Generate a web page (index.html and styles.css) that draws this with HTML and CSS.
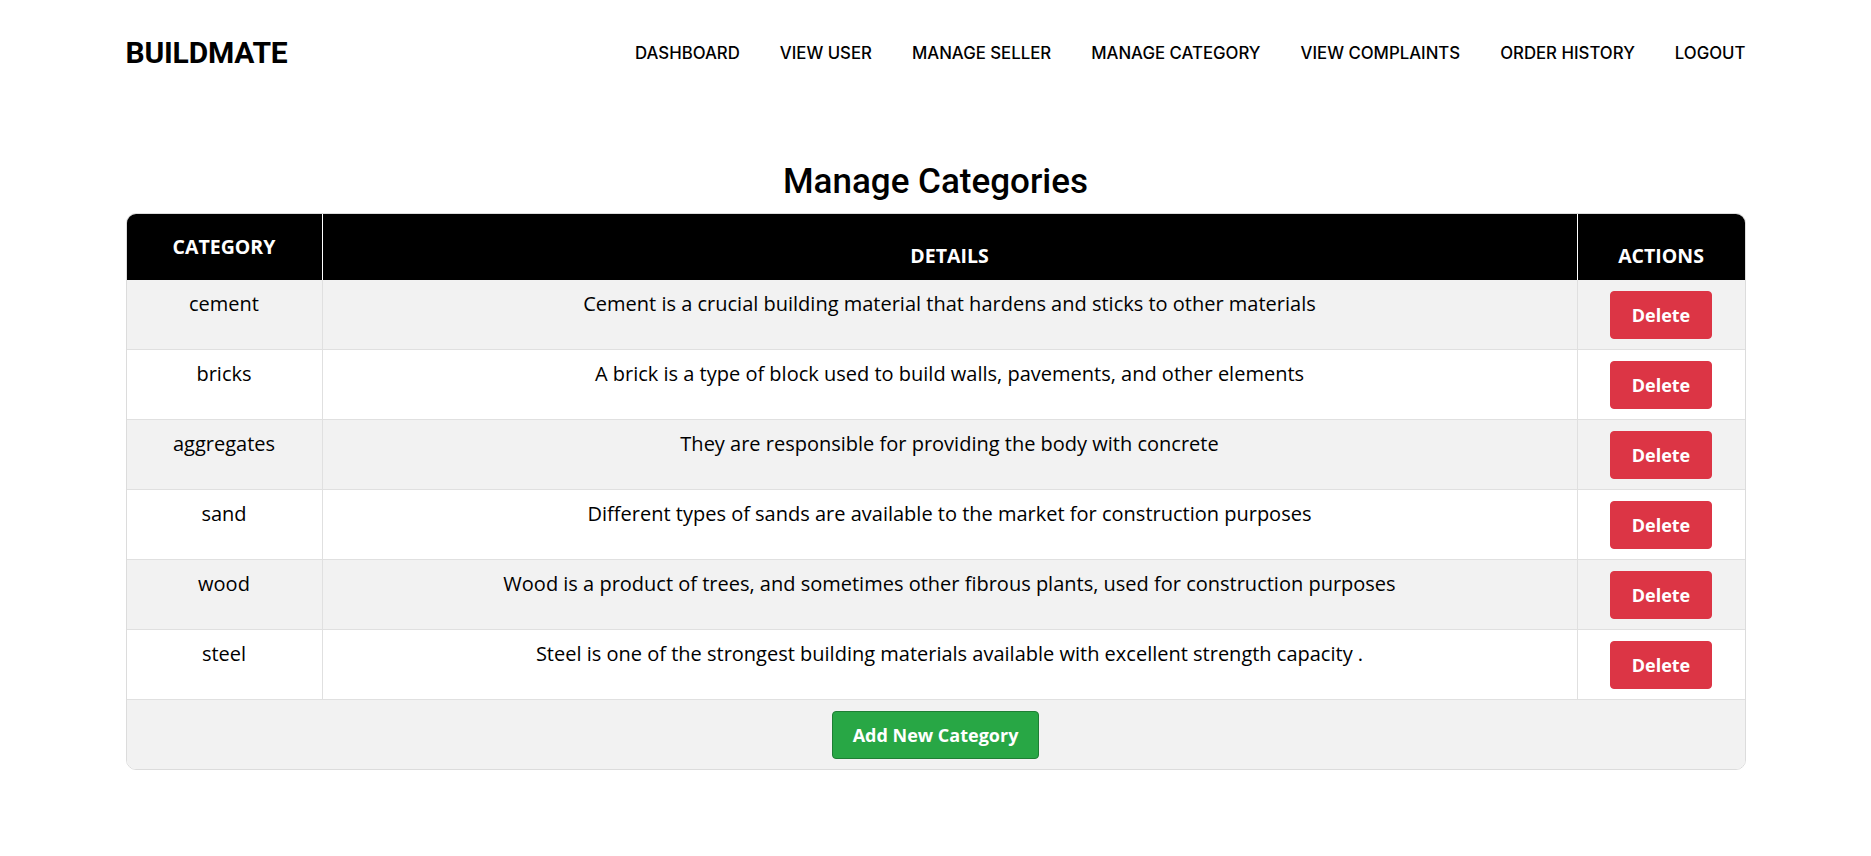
FILE: index.html
```html
<!DOCTYPE html>
<html lang="en">
<head>
<meta charset="utf-8">
<title>BuildMate - Manage Categories</title>
<link rel="stylesheet" href="styles.css">
</head>
<body>
<header class="topbar">
  <div class="brand">BUILDMATE</div>
  <nav class="nav">
    <a href="#">DASHBOARD</a>
    <a href="#">VIEW USER</a>
    <a href="#">MANAGE SELLER</a>
    <a href="#">MANAGE CATEGORY</a>
    <a href="#">VIEW COMPLAINTS</a>
    <a href="#">ORDER HISTORY</a>
    <a href="#">LOGOUT</a>
  </nav>
</header>
<main class="content">
  <h1 class="title">Manage Categories</h1>
  <div class="table-wrap">
    <table class="cat-table">
      <colgroup>
        <col class="col-cat">
        <col>
        <col class="col-act">
      </colgroup>
      <thead>
        <tr>
          <th class="th-mid">CATEGORY</th>
          <th>DETAILS</th>
          <th>ACTIONS</th>
        </tr>
      </thead>
      <tbody>
        <tr>
          <td>cement</td>
          <td>Cement is a crucial building material that hardens and sticks to other materials</td>
          <td><button class="btn btn-delete">Delete</button></td>
        </tr>
        <tr>
          <td>bricks</td>
          <td>A brick is a type of block used to build walls, pavements, and other elements</td>
          <td><button class="btn btn-delete">Delete</button></td>
        </tr>
        <tr>
          <td>aggregates</td>
          <td>They are responsible for providing the body with concrete</td>
          <td><button class="btn btn-delete">Delete</button></td>
        </tr>
        <tr>
          <td>sand</td>
          <td>Different types of sands are available to the market for construction purposes</td>
          <td><button class="btn btn-delete">Delete</button></td>
        </tr>
        <tr>
          <td>wood</td>
          <td>Wood is a product of trees, and sometimes other fibrous plants, used for construction purposes</td>
          <td><button class="btn btn-delete">Delete</button></td>
        </tr>
        <tr>
          <td>steel</td>
          <td>Steel is one of the strongest building materials available with excellent strength capacity .</td>
          <td><button class="btn btn-delete">Delete</button></td>
        </tr>
        <tr class="foot-row">
          <td colspan="3"><button class="btn btn-add">Add New Category</button></td>
        </tr>
      </tbody>
    </table>
  </div>
</main>
</body>
</html>
```

FILE: styles.css
```css
* { box-sizing: border-box; }

body {
  margin: 0;
  background: #fff;
  color: #000;
  font-family: "Open Sans", "Liberation Sans", sans-serif;
}

.topbar {
  width: 1620px;
  margin: 0 auto;
  height: 105px;
  display: flex;
  align-items: center;
  justify-content: space-between;
}

.brand {
  font-family: Roboto, "Liberation Sans", sans-serif;
  font-weight: 700;
  font-size: 30px;
  letter-spacing: -0.2px;
}

.nav {
  display: flex;
  gap: 40px;
}

.nav a {
  font-family: Inter, "Liberation Sans", sans-serif;
  font-weight: 500;
  font-size: 16.8px;
  color: #000;
  text-decoration: none;
}

.content {
  width: 1620px;
  margin: 0 auto;
}

.title {
  font-family: Roboto, "Liberation Sans", sans-serif;
  font-weight: 500;
  font-size: 35px;
  text-align: center;
  margin: 58px 0 12px;
  line-height: 37.5px;
}

.table-wrap {
  border: 1px solid #dcdcdc;
  border-radius: 10px;
  overflow: hidden;
}

.cat-table {
  width: 100%;
  border-collapse: separate;
  border-spacing: 0;
  table-layout: fixed;
  font-size: 20px;
}

.col-cat { width: 196px; }
.col-act { width: 167px; }

.cat-table th {
  background: #000;
  color: #fff;
  font-weight: 700;
  font-size: 19.5px;
  height: 66px;
  line-height: 24px;
  padding: 0 10px 12px;
  vertical-align: bottom;
  border-right: 1px solid #fff;
}

.cat-table th.th-mid {
  vertical-align: middle;
  padding: 0 10px;
}

.cat-table th:last-child { border-right: none; }

.cat-table td {
  text-align: center;
  vertical-align: top;
  line-height: 26px;
  padding: 11px 10px 10px;
  border-right: 1px solid #e0e0e0;
  border-bottom: 1px solid #e0e0e0;
}

.cat-table td:last-child { border-right: none; }

.cat-table tbody tr:nth-child(odd) td { background: #f2f2f2; }
.cat-table tbody tr:nth-child(even) td { background: #fff; }

.cat-table tr.foot-row td {
  background: #f2f2f2;
  border-bottom: none;
  border-right: none;
  padding: 11px 10px 10px;
}

.btn {
  font-family: "Open Sans", "Liberation Sans", sans-serif;
  font-weight: 700;
  font-size: 18px;
  line-height: 26px;
  color: #fff;
  border-radius: 4px;
  cursor: pointer;
}

.btn-delete {
  background: #dc3545;
  border: 1px solid #dc3545;
  padding: 10px 21px;
}

.btn-add {
  background: #28a745;
  border: 1px solid #1e7e34;
  padding: 10px 20px;
}
```
